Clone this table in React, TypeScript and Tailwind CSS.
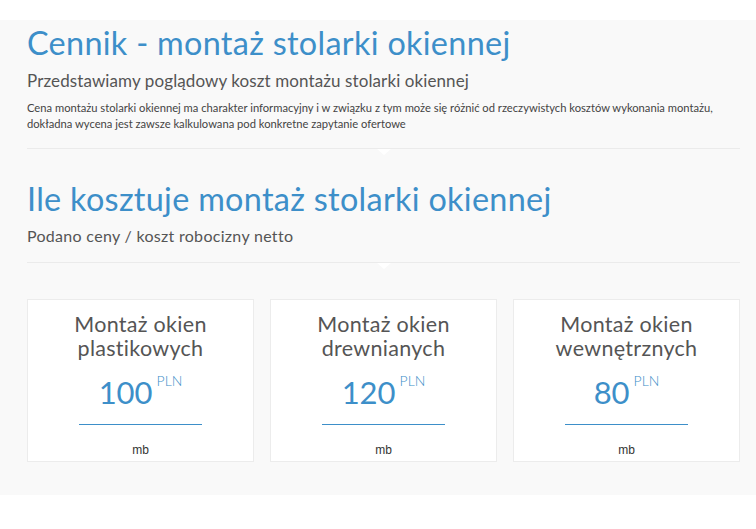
const cards = [
  { title: ['Montaż okien', 'plastikowych'], price: '100' },
  { title: ['Montaż okien', 'drewnianych'], price: '120' },
  { title: ['Montaż okien', 'wewnętrznych'], price: '80' },
];

function Divider() {
  return (
    <div className="relative h-px bg-[#ebebeb]">
      <div className="absolute left-1/2 top-px -translate-x-1/2 w-0 h-0 border-x-[7px] border-x-transparent border-t-[6px] border-t-white" />
    </div>
  );
}

export default function App() {
  return (
    <div className="w-[756px] h-[529px] bg-white pt-5 font-['Lato',sans-serif] overflow-hidden">
      <div className="bg-[#f9f9f9] h-[475px] pl-[27px] pr-4">
        <h1 className="pt-[3px] text-[32.4px] leading-[40px] text-[#3d8fc9] tracking-[0.3px]">
          Cennik - montaż stolarki okiennej
        </h1>
        <p className="mt-[7px] text-[17px] leading-[22px] text-[#555] tracking-[0.1px]">
          Przedstawiamy poglądowy koszt montażu stolarki okiennej
        </p>
        <p className="mt-[8px] text-[11.2px] leading-[16px] text-[#444] whitespace-nowrap">
          Cena montażu stolarki okiennej ma charakter informacyjny i w związku z tym może się różnić od rzeczywistych kosztów wykonania montażu,
          <br />
          dokładna wycena jest zawsze kalkulowana pod konkretne zapytanie ofertowe
        </p>
        <div className="mt-[16px]">
          <Divider />
        </div>
        <h2 className="mt-[30px] text-[32.4px] leading-[40px] text-[#3d8fc9] tracking-[0.3px]">
          Ile kosztuje montaż stolarki okiennej
        </h2>
        <p className="mt-[6px] text-[16px] leading-[22px] text-[#555] tracking-[0.3px]">
          Podano ceny / koszt robocizny netto
        </p>
        <div className="mt-[15px]">
          <Divider />
        </div>
        <div className="mt-[36px] grid grid-cols-3 gap-4">
          {cards.map((c) => (
            <div
              key={c.price}
              className="h-[163px] bg-white border border-[#ececec] flex flex-col items-center pt-[12px]"
            >
              <div className="text-[21.5px] leading-[24px] text-[#555] text-center tracking-[0.3px]">
                <div>{c.title[0]}</div>
                <div>{c.title[1]}</div>
              </div>
              <div className="mt-[14px] flex items-start text-[#3d8fc9]">
                <span className="text-[31px] leading-[36px]">{c.price}</span>
                <span className="ml-[4px] text-[14px] leading-[14px] font-light">PLN</span>
              </div>
              <div className="mt-[14px] w-[123px] h-px bg-[#3d8fc9]" />
              <div className="mt-[18px] text-[12px] leading-[14px] text-[#333] font-['Liberation_Sans',sans-serif]">
                mb
              </div>
            </div>
          ))}
        </div>
      </div>
    </div>
  );
}
